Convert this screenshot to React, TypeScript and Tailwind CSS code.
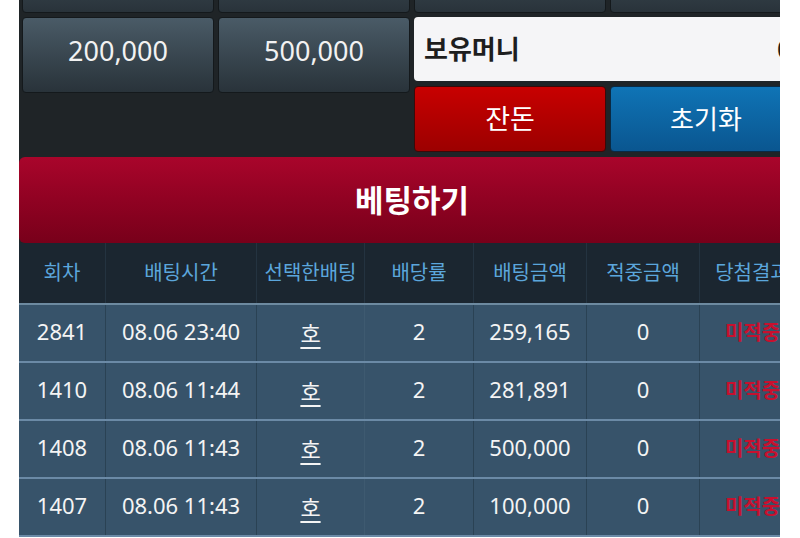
import React from 'react';

const font = { fontFamily: '"Noto Sans", "Noto Sans CJK KR", sans-serif' };

const topRow = ['10,000', '50,000', '100,000', '1,000,000'];

const rows = [
  { round: '2841', time: '08.06 23:40', pick: '호', rate: '2', amount: '259,165', hit: '0', result: '미적중' },
  { round: '1410', time: '08.06 11:44', pick: '호', rate: '2', amount: '281,891', hit: '0', result: '미적중' },
  { round: '1408', time: '08.06 11:43', pick: '호', rate: '2', amount: '500,000', hit: '0', result: '미적중' },
  { round: '1407', time: '08.06 11:43', pick: '호', rate: '2', amount: '100,000', hit: '0', result: '미적중' },
];

const headers = ['회차', '배팅시간', '선택한배팅', '배당률', '배팅금액', '적중금액', '당첨결과'];

const grid = 'grid grid-cols-[87px_151px_108px_109px_113px_113px_105px]';

function ChipButton({ label }: { label?: string }) {
  return (
    <button className="h-[76px] w-full rounded-[4px] border border-[#14191c] bg-gradient-to-b from-[#4a5b67] to-[#29333a] pb-[7px] text-[27px] text-[#f2f2f2]">
      {label}
    </button>
  );
}

export default function App() {
  return (
    <div className="h-[538px] w-[800px] overflow-hidden bg-white" style={font}>
      <div className="ml-[19px] w-[761px] overflow-hidden">
        <div className="-mt-[63px] w-[786px] bg-[#1f2427]">
          <div className="flex flex-col gap-[4px] px-[3px] pb-[5px]">
            {/* row scrolled out of view */}
            <div className="grid grid-cols-4 gap-[4px]">
              {topRow.map((t) => (
                <ChipButton key={t} />
              ))}
            </div>
            <div className="grid grid-cols-4 gap-[4px]">
              <div className="self-start">
                <ChipButton label="200,000" />
              </div>
              <div className="self-start">
                <ChipButton label="500,000" />
              </div>
              <div className="col-span-2 flex flex-col gap-[5px]">
                <div className="flex h-[64px] items-center justify-between rounded-[4px] bg-[#f5f5f7] pl-[10px] pr-[10px] text-[26px] font-bold text-[#1e1e1e]">
                  <span>보유머니</span>
                  <span>0</span>
                </div>
                <div className="grid grid-cols-2 gap-[4px]">
                  <button className="h-[66px] rounded-[4px] border border-[#3a0a0a] bg-gradient-to-b from-[#c80000] to-[#9c0000] text-[27px] text-white">
                    잔돈
                  </button>
                  <button className="h-[66px] rounded-[4px] border border-[#0a2a44] bg-gradient-to-b from-[#0f74b6] to-[#0a5690] text-[26px] text-white">
                    초기화
                  </button>
                </div>
              </div>
            </div>
          </div>

          <button className="flex h-[86px] w-full items-center justify-center rounded-[6px] bg-gradient-to-b from-[#a9052b] to-[#78001a] text-[31px] font-bold text-white">
            베팅하기
          </button>

          <div className={`${grid} h-[62px] border-b-2 border-[#6d8aa0] bg-[#1b2630]`}>
            {headers.map((h) => (
              <div
                key={h}
                className="flex items-center justify-center whitespace-nowrap border-r border-[#243340] text-[20px] text-[#5ba6dc]"
              >
                {h}
              </div>
            ))}
          </div>

          {rows.map((r, i) => (
            <div key={i} className={`${grid} h-[58px] border-b-2 border-[#6b8aa6] bg-[#37536a] text-[22px] text-[#f4f4f4]`}>
              <div className="flex items-center justify-center border-r border-[#2a4254] pb-[4px]">{r.round}</div>
              <div className="flex items-center justify-center border-r border-[#2a4254] pb-[4px]">{r.time}</div>
              <div className="flex items-center justify-center border-r border-[#3e5a70]">
                <span className="underline underline-offset-[5px]">{r.pick}</span>
              </div>
              <div className="flex items-center justify-center border-r border-[#2a4254] pb-[4px]">{r.rate}</div>
              <div className="flex items-center justify-center border-r border-[#2a4254] pb-[4px]">{r.amount}</div>
              <div className="flex items-center justify-center border-r border-[#2a4254] pb-[4px]">{r.hit}</div>
              <div className="flex items-center justify-center whitespace-nowrap text-[20px] font-bold text-[#c8102e]">{r.result}</div>
            </div>
          ))}
        </div>
      </div>
    </div>
  );
}
